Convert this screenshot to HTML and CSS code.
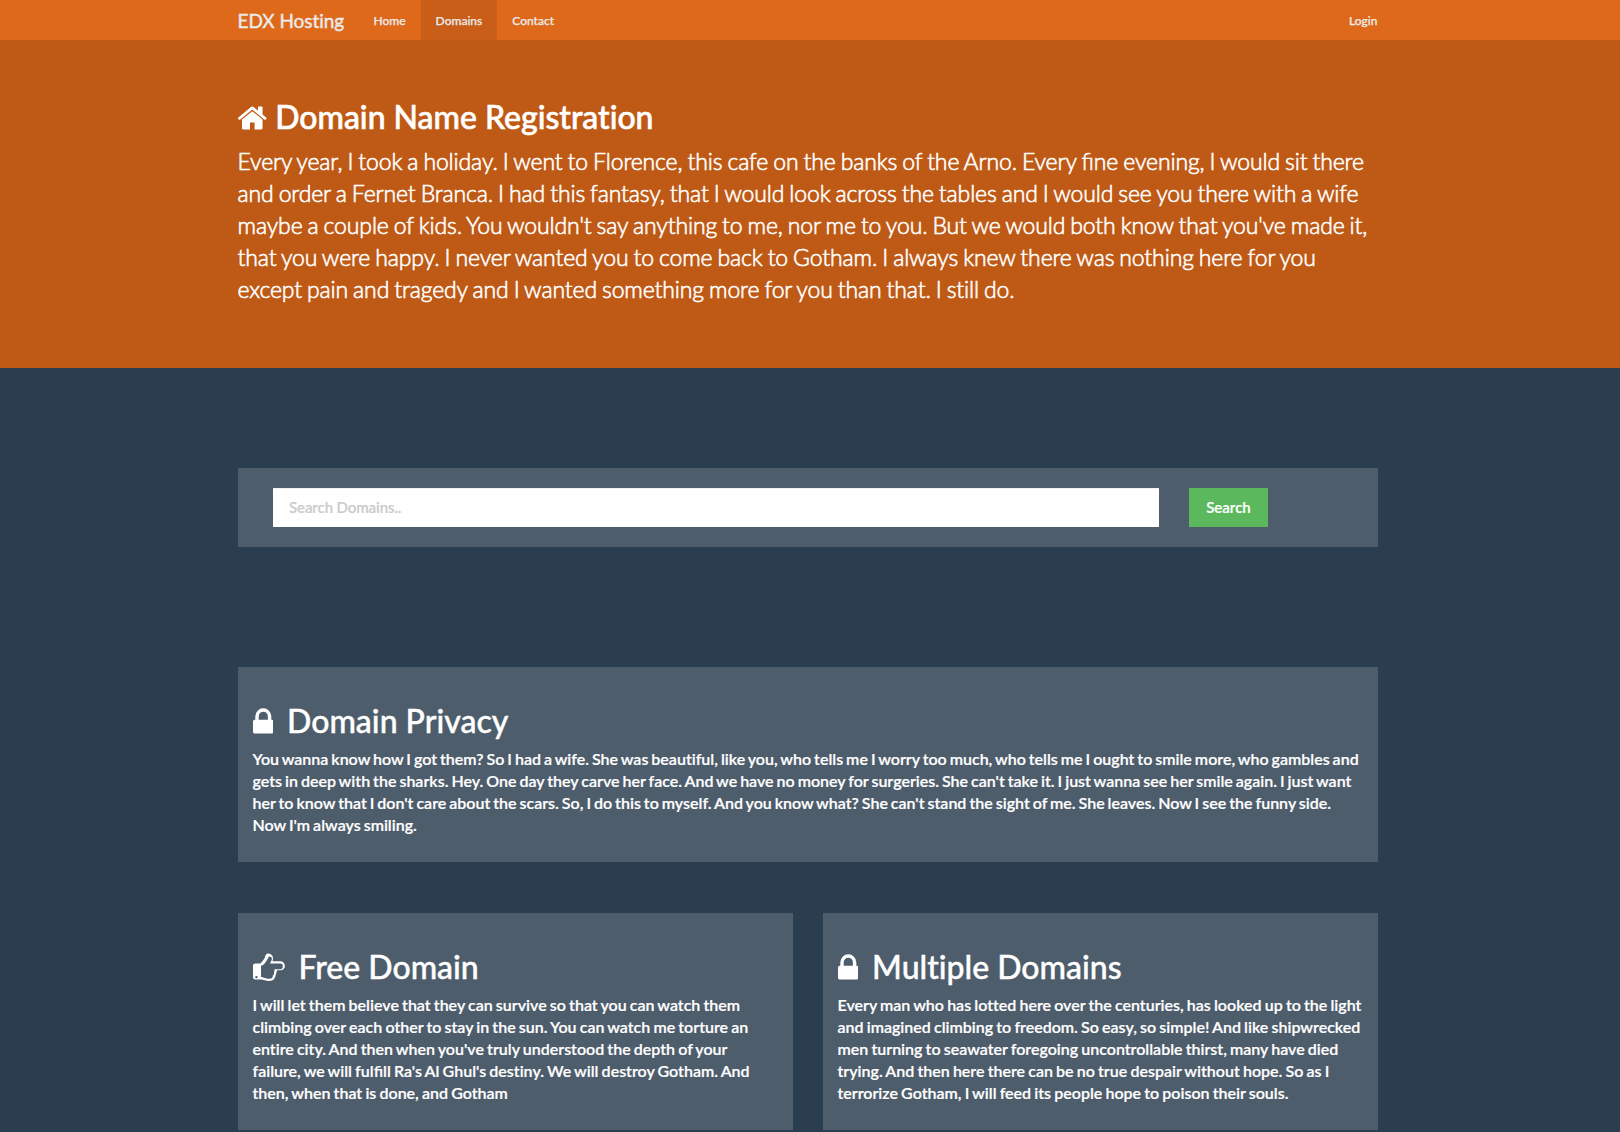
FILE: index.html
```html
<!DOCTYPE html>
<html lang="en">
<head>
<meta charset="utf-8">
<title>EDX Hosting - Domains</title>
<link rel="stylesheet" href="styles.css">
</head>
<body>
<svg class="sprite" aria-hidden="true">
  <symbol id="home" viewBox="96 0 1664 1792"><path d="M1472 992v480q0 26-19 45t-45 19h-384v-384h-256v384h-384q-26 0-45-19t-19-45v-480q0-1 .5-3t.5-3l575-474 575 474q1 2 1 6zm223-69l-62 74q-8 9-21 11h-3q-13 0-21-7l-692-577-692 577q-12 8-24 7-13-2-21-11l-62-74q-8-10-7-23.5t11-21.5l719-599q32-26 76-26t76 26l244 204v-195q0-14 9-23t23-9h192q14 0 23 9t9 23v408l219 182q10 8 11 21.5t-7 23.5z"/></symbol>
  <symbol id="lock" viewBox="320 0 1152 1792"><path d="M640 768h512v-192q0-106-75-181t-181-75-181 75-75 181v192zm832 96v576q0 40-28 68t-68 28h-960q-40 0-68-28t-28-68v-576q0-40 28-68t68-28h32v-192q0-184 132-316t316-132 316 132 132 316v192h32q40 0 68 28t28 68z"/></symbol>
  <symbol id="hand" viewBox="0 0 1792 1792"><path fill-rule="evenodd" d="M256 1408q0-26-19-45t-45-19-45 19-19 45 19 45 45 19 45-19 19-45zM1664 768q0-51-39-89.500t-89-38.500h-576q0-20 15-48.500t33-55 33-68 15-84.500q0-67-44.500-97.500t-115.500-30.500q-24 0-55 92-25 60-70 130-50 70-110 145-110 138-180 138h-32v640h32q35 0 100 20 70 25 135 46 120 36 205 36 165 0 185-112 5-28-5-60 65-32 75-115 5-38-8-70 45-50 40-118-2-30-12-60h341q51 0 89.500-38.500t38.500-89.500zM1792 769q0 105-76 180t-180 75h-189q-3 76-42 135 4 85-43 154 2 90-64 160-60 155-305 153-110 0-235-38-130-44-190-52h-340q-53 0-90.500-37.500t-37.500-90.500v-640q0-53 37.500-90.500t90.500-37.500h288q22-8 100-108 70-90 118-165 22-36 38-90 24-110 62-140 36-50 102-50 115 0 200 65t85 193q0 85-33 167h437q104 0 180 76t76 181z"/></symbol>
</svg>

<nav class="navbar">
  <div class="container nav-row">
    <a class="brand">EDX Hosting</a>
    <a class="nav-link">Home</a>
    <a class="nav-link active">Domains</a>
    <a class="nav-link">Contact</a>
    <a class="nav-link login">Login</a>
  </div>
</nav>

<header class="hero">
  <div class="container">
    <h1 class="title hero-title"><svg class="icon home"><use href="#home"/></svg><span>Domain Name Registration</span></h1>
    <p class="lead">Every year, I took a holiday. I went to Florence, this cafe on the banks of the Arno. Every <span class="liga">fi</span>ne evening, I would sit there<br>and order a Fernet Branca. I had this fantasy, that I would look across the tables and I would see you there with a wife<br>maybe a couple of kids. You wouldn't say anything to me, nor me to you. But we would both know that you've made it,<br>that you were happy. I never wanted you to come back to Gotham. I always knew there was nothing here for you<br>except pain and tragedy and I wanted something more for you than that. I still do.</p>
  </div>
</header>

<main class="container content">
  <form class="search">
    <input class="field" type="text" placeholder="Search Domains..">
    <button class="button" type="button">Search</button>
  </form>

  <section class="card privacy">
    <h2 class="title"><svg class="icon lock"><use href="#lock"/></svg><span>Domain Privacy</span></h2>
    <p class="copy">You wanna know how I got them? So I had a wife. She was beautiful, like you, who tells me I worry too much, who tells me I ought to smile more, who gambles and<br>gets in deep with the sharks. Hey. One day they carve her face. And we have no money for surgeries. She can't take it. I just wanna see her smile again. I just want<br>her to know that I don't care about the scars. So, I do this to myself. And you know what? She can't stand the sight of me. She leaves. Now I see the funny side.<br>Now I'm always smiling.</p>
  </section>

  <div class="columns">
    <section class="card">
      <h2 class="title"><svg class="icon hand"><use href="#hand"/></svg><span>Free Domain</span></h2>
      <p class="copy">I will let them believe that they can survive so that you can watch them<br>climbing over each other to stay in the sun. You can watch me torture an<br>entire city. And then when you've truly understood the depth of your<br>failure, we will ful<span class="liga">fi</span>ll Ra's Al Ghul's destiny. We will destroy Gotham. And<br>then, when that is done, and Gotham</p>
    </section>
    <section class="card">
      <h2 class="title"><svg class="icon lock"><use href="#lock"/></svg><span>Multiple Domains</span></h2>
      <p class="copy">Every man who has lotted here over the centuries, has looked up to the light<br>and imagined climbing to freedom. So easy, so simple! And like shipwrecked<br>men turning to seawater foregoing uncontrollable thirst, many have died<br>trying. And then here there can be no true despair without hope. So as I<br>terrorize Gotham, I will feed its people hope to poison their souls.</p>
    </section>
  </div>
</main>
</body>
</html>
```

FILE: styles.css
```css
* { box-sizing: border-box; }
body {
  margin: 0;
  height: 1132px;
  overflow: hidden;
  background: #2b3e50;
  color: #fff;
  font-family: Lato, sans-serif;
  font-size: 16px;
  font-variant-ligatures: none;
}
.sprite { display: none; }
.container { width: 1140px; margin-left: 238px; }
.navbar { height: 40px; background: #df691a; }
.nav-row { display: flex; height: 40px; line-height: 41px; color: #ebebeb; }
.brand { width: 120.5px; font-size: 19px; letter-spacing: -0.05px; text-indent: -0.5px; white-space: nowrap; -webkit-text-stroke: 0.4px; }
.nav-link { padding: 0 15px; font-size: 12px; font-weight: 500; white-space: nowrap; -webkit-text-stroke: 0.25px; }
.active { background: #c85e17; }
.login { margin-left: auto; padding-right: 0.5px; }
.hero { height: 328px; padding-top: 59px; background: #bf5a16; }
.title {
  display: flex;
  align-items: center;
  gap: 14px;
  height: 35px;
  margin: 0;
  font-size: 32px;
  font-weight: 500;
  line-height: 35px;
  white-space: nowrap;
  -webkit-text-stroke: 0.4px;
}
.hero-title { gap: 7.5px; letter-spacing: -0.02px; -webkit-text-stroke: 0.6px; }
.icon { height: 32px; margin-top: 2px; fill: #fff; flex: none; stroke: none; }
.home { width: 29.7px; }
.lock { width: 20.6px; }
.hand { width: 32px; }
.lead { margin: 11px 0 0 -0.5px; font-size: 23px; line-height: 32px; font-weight: 300; letter-spacing: -0.13px; word-spacing: -1.05px; white-space: nowrap; -webkit-text-stroke: 0.6px; }
.liga { letter-spacing: 0; font-variant-ligatures: common-ligatures; }
.content { padding-top: 100px; }
.search { display: flex; height: 79px; padding: 20px 35px; gap: 30px; background: #4e5d6c; }
.field {
  width: 886px;
  height: 39px;
  padding: 0 16px 2px;
  border: 0;
  background: #fff;
  box-shadow: inset 0 2px 1px -1px #f4eef0;
  font: 600 15px Lato, sans-serif;
  letter-spacing: -0.1px;
}
.field::placeholder { color: #ccc; -webkit-text-stroke: 0.2px; }
.button { width: 79px; height: 39px; padding: 0 0 2px; border: 0; background: #5cb85c; color: #fff; font: 600 15px Lato, sans-serif; -webkit-text-stroke: 0.2px; }
.card { padding: 36px 14.5px 0; background: #4e5d6c; }
.privacy { height: 195px; margin-top: 120px; }
.columns { display: grid; grid-template-columns: 555px 555px; gap: 30px; height: 217px; margin-top: 51px; }
.copy { margin: 10px 0 0; font-size: 16px; font-weight: 600; line-height: 22px; word-spacing: -0.83px; white-space: nowrap; -webkit-text-stroke: 0.2px; }
.privacy .copy { word-spacing: -1px; }
```
